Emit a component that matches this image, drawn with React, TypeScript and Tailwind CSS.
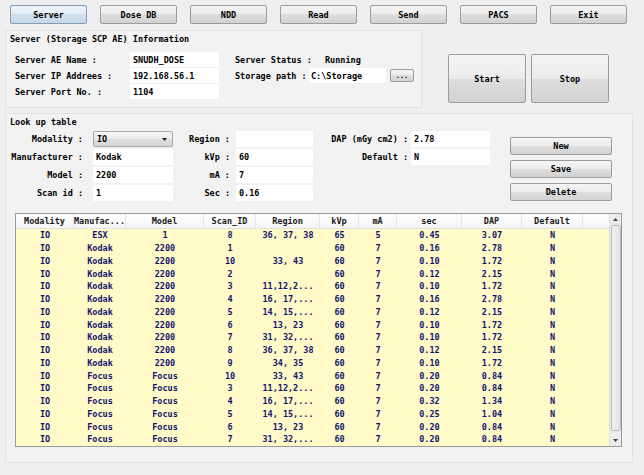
import React from "react";

const btn =
  "flex items-center justify-center border border-[#9c9c9c] rounded-[2px] bg-[linear-gradient(#f4f4f4_0%,#ececec_50%,#dedede_50%,#d2d2d2_100%)] text-black";

const rows: string[][] = [
  ["IO", "ESX", "1", "8", "36, 37, 38", "65", "5", "0.45", "3.07", "N"],
  ["IO", "Kodak", "2200", "1", "", "60", "7", "0.16", "2.78", "N"],
  ["IO", "Kodak", "2200", "10", "33, 43", "60", "7", "0.10", "1.72", "N"],
  ["IO", "Kodak", "2200", "2", "", "60", "7", "0.12", "2.15", "N"],
  ["IO", "Kodak", "2200", "3", "11,12,2...", "60", "7", "0.10", "1.72", "N"],
  ["IO", "Kodak", "2200", "4", "16, 17,...", "60", "7", "0.16", "2.78", "N"],
  ["IO", "Kodak", "2200", "5", "14, 15,...", "60", "7", "0.12", "2.15", "N"],
  ["IO", "Kodak", "2200", "6", "13, 23", "60", "7", "0.10", "1.72", "N"],
  ["IO", "Kodak", "2200", "7", "31, 32,...", "60", "7", "0.10", "1.72", "N"],
  ["IO", "Kodak", "2200", "8", "36, 37, 38", "60", "7", "0.12", "2.15", "N"],
  ["IO", "Kodak", "2200", "9", "34, 35", "60", "7", "0.10", "1.72", "N"],
  ["IO", "Focus", "Focus", "10", "33, 43", "60", "7", "0.20", "0.84", "N"],
  ["IO", "Focus", "Focus", "3", "11,12,2...", "60", "7", "0.20", "0.84", "N"],
  ["IO", "Focus", "Focus", "4", "16, 17,...", "60", "7", "0.32", "1.34", "N"],
  ["IO", "Focus", "Focus", "5", "14, 15,...", "60", "7", "0.25", "1.04", "N"],
  ["IO", "Focus", "Focus", "6", "13, 23", "60", "7", "0.20", "0.84", "N"],
  ["IO", "Focus", "Focus", "7", "31, 32,...", "60", "7", "0.20", "0.84", "N"],
];

const headers = ["Modality", "Manufac...", "Model", "Scan_ID", "Region", "kVp", "mA", "sec", "DAP", "Default"];
const widths = [58, 52, 78, 52, 64, 39, 38, 65, 60, 61];

function Field({ w, value }: { w: string; value: string }) {
  return (
    <div className={`${w} h-[16px] bg-white flex items-center pl-[3px] whitespace-nowrap`}>{value}</div>
  );
}

export default function App() {
  return (
    <div className="w-[644px] h-[475px] bg-[#efefef] overflow-hidden font-['DejaVu_Sans_Mono',monospace] font-bold text-[8.5px] leading-[10px] text-black">
      {/* Top buttons */}
      <div className="flex gap-[13px] pl-[10px] pt-[5px]">
        <div className="flex items-center justify-center w-[77px] h-[19px] border border-[#7f9db9] rounded-[2px] bg-[linear-gradient(#eef4fa_0%,#e2ecf6_50%,#d0e0ef_50%,#c6d8ea_100%)]">
          Server
        </div>
        {["Dose DB", "NDD", "Read", "Send", "PACS", "Exit"].map((t) => (
          <div key={t} className={`${btn} w-[77px] h-[19px]`}>
            {t}
          </div>
        ))}
      </div>

      {/* Server section */}
      <div className="flex mt-[6px]">
        <div className="ml-[5px] w-[417px] h-[78px] border border-[#e2e2e2] bg-[#f2f2f2] pl-[4px] pt-[3px]">
          <div className="h-[10px]">Server (Storage SCP AE) Information</div>
          <div className="flex mt-[8px] pl-[5px]">
            <div className="flex flex-col gap-[1px]">
              {[
                ["Server AE Name :", "SNUDH_DOSE"],
                ["Server IP Addrees :", "192.168.56.1"],
                ["Server Port No. :", "1104"],
              ].map(([l, v]) => (
                <div key={l} className="flex items-center h-[15px]">
                  <div className="w-[115px]">{l}</div>
                  <div className="w-[89px] h-[15px] bg-white flex items-center pl-[3px]">{v}</div>
                </div>
              ))}
            </div>
            <div className="flex flex-col gap-[1px] ml-[16px]">
              <div className="flex items-center h-[15px]">
                <div className="w-[90px]">Server Status :</div>
                <div>Running</div>
              </div>
              <div className="flex items-center h-[15px]">
                <div className="w-[74px]">Storage path :</div>
                <div className="w-[77px] h-[15px] bg-white flex items-center pl-[2px]">C:\Storage</div>
                <div className={`${btn} ml-[4px] w-[24px] h-[13px] text-[7px]`}>...</div>
              </div>
            </div>
          </div>
        </div>
        <div className={`${btn} ml-[26px] mt-[24px] w-[78px] h-[49px]`}>Start</div>
        <div className={`${btn} ml-[5px] mt-[24px] w-[78px] h-[49px]`}>Stop</div>
      </div>

      {/* Look up table section */}
      <div className="ml-[5px] mt-[5px] w-[628px] h-[350px] border border-[#e2e2e2] bg-[#f2f2f2] pt-[3px]">
        <div className="h-[10px] pl-[4px]">Look up table</div>
        <div className="flex mt-[4px]">
          <div className="flex flex-col gap-[2px] pl-[4px]">
            {[
              ["Modality :", "IO", "Region :", "", "DAP (mGy cm2) :", "2.78"],
              ["Manufacturer :", "Kodak", "kVp :", "60", "Default :", "N"],
              ["Model :", "2200", "mA :", "7", "", ""],
              ["Scan id :", "1", "Sec :", "0.16", "", ""],
            ].map((r, i) => (
              <div key={i} className="flex items-center h-[16px]">
                <div className="w-[73px] text-right whitespace-nowrap">{r[0]}</div>
                <div className="ml-[10px]">
                  {i === 0 ? (
                    <div className="w-[80px] h-[16px] flex items-center pl-[3px] border border-[#a8a8a8] rounded-[2px] bg-[linear-gradient(#f6f6f6_0%,#ececec_50%,#dedede_50%,#d6d6d6_100%)] relative">
                      IO
                      <svg className="absolute right-[5px] top-[6px]" width="5" height="3" viewBox="0 0 5 3">
                        <path d="M0 0H5L2.5 3Z" fill="#222" />
                      </svg>
                    </div>
                  ) : (
                    <Field w="w-[80px]" value={r[1]} />
                  )}
                </div>
                <div className="w-[57px] text-right">{r[2]}</div>
                <div className="ml-[6px]">
                  <Field w="w-[77px]" value={r[3]} />
                </div>
                {r[4] ? (
                  <>
                    <div className="w-[95px] text-right whitespace-nowrap">{r[4]}</div>
                    <div className="ml-[3px]">
                      <Field w="w-[79px]" value={r[5]} />
                    </div>
                  </>
                ) : null}
              </div>
            ))}
          </div>
          <div className="flex flex-col gap-[5px] ml-[20px] mt-[6px]">
            {["New", "Save", "Delete"].map((t) => (
              <div key={t} className={`${btn} w-[102px] h-[18px]`}>
                {t}
              </div>
            ))}
          </div>
        </div>

        {/* Table */}
        <div className="ml-[9px] mt-[12px] w-[607px] border border-[#9a9a9a] bg-white flex">
          <div className="w-[593px]">
            <div className="flex h-[15px] bg-[linear-gradient(#ffffff_0%,#f4f4f4_100%)] border-b border-[#e2e2e2]">
              {headers.map((h, i) => (
                <div
                  key={h}
                  style={{ width: widths[i] }}
                  className="flex items-center justify-center border-r border-[#e6e6e6] whitespace-nowrap text-[#1a1a1a]"
                >
                  {h}
                </div>
              ))}
            </div>
            <div className="bg-[#fffac8]">
              {rows.map((r, ri) => (
                <div key={ri} className="flex h-[12.75px] text-[#14146e]">
                  {r.map((c, ci) => (
                    <div
                      key={ci}
                      style={{ width: widths[ci] }}
                      className="flex items-center justify-center whitespace-nowrap"
                    >
                      {c}
                    </div>
                  ))}
                </div>
              ))}
            </div>
          </div>
          {/* scrollbar */}
          <div className="w-[12px] bg-[#ececec] border-l border-[#e0e0e0] flex flex-col items-center">
            <div className="h-[10px] flex items-center justify-center">
              <svg width="5" height="3" viewBox="0 0 5 3">
                <path d="M0 3H5L2.5 0Z" fill="#444" />
              </svg>
            </div>
            <div className="w-[10px] h-[206px] mt-[1px] border border-[#b8b8b8] rounded-[2px] bg-[linear-gradient(90deg,#f2f2f2_0%,#e2e2e2_100%)]" />
            <div className="flex-1" />
            <div className="h-[10px] flex items-center justify-center">
              <svg width="5" height="3" viewBox="0 0 5 3">
                <path d="M0 0H5L2.5 3Z" fill="#444" />
              </svg>
            </div>
          </div>
        </div>
      </div>
    </div>
  );
}
